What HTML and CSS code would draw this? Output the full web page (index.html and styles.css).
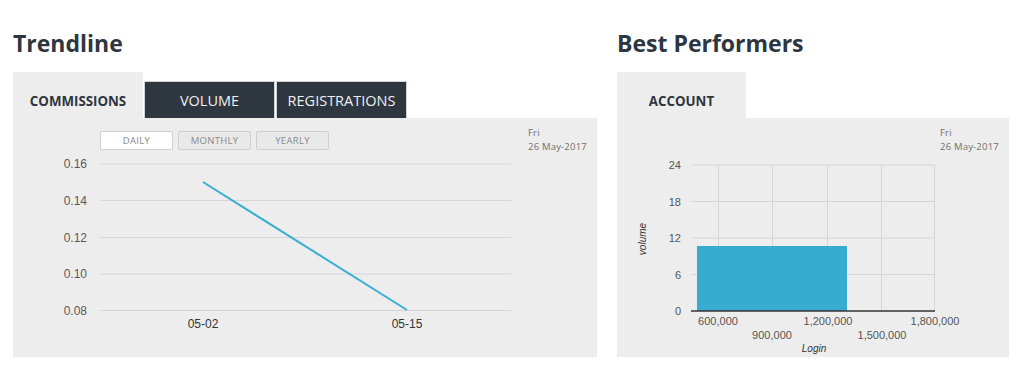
FILE: index.html
```html
<!DOCTYPE html>
<html>
<head>
<meta charset="utf-8">
<link rel="stylesheet" href="styles.css">
</head>
<body>
<div class="page">
  <section class="card card-left">
    <h2 class="title">Trendline</h2>
    <div class="tabs">
      <div class="tab tab-active tab-wide">COMMISSIONS</div>
      <div class="tab tab-dark">VOLUME</div>
      <div class="tab tab-dark">REGISTRATIONS</div>
    </div>
    <div class="panel">
      <div class="chart-left">
        <div class="ranges">
          <span class="range range-on">DAILY</span>
          <span class="range">MONTHLY</span>
          <span class="range">YEARLY</span>
        </div>
        <svg class="svg-left" width="515" height="207" viewBox="0 0 515 207">
          <g stroke="#d6d6d6" stroke-width="1">
            <line x1="87" y1="14" x2="498" y2="14"/>
            <line x1="87" y1="50.5" x2="498" y2="50.5"/>
            <line x1="87" y1="87.5" x2="498" y2="87.5"/>
            <line x1="87" y1="124" x2="498" y2="124"/>
            <line x1="87" y1="160.5" x2="498" y2="160.5"/>
          </g>
          <g class="axis-text" text-anchor="end">
            <text x="74" y="18">0.16</text>
            <text x="74" y="55">0.14</text>
            <text x="74" y="92">0.12</text>
            <text x="74" y="128">0.10</text>
            <text x="74" y="165">0.08</text>
          </g>
          <line x1="190" y1="32" x2="394" y2="160" stroke="#3aaed0" stroke-width="2"/>
          <g class="axis-text dark" text-anchor="middle">
            <text x="190" y="178">05-02</text>
            <text x="394" y="178">05-15</text>
          </g>
        </svg>
      </div>
      <div class="date">Fri<br>26 May-2017</div>
    </div>
  </section>

  <section class="card card-right">
    <h2 class="title">Best Performers</h2>
    <div class="tabs">
      <div class="tab tab-active tab-account">ACCOUNT</div>
    </div>
    <div class="panel">
      <svg class="svg-right" width="323" height="239" viewBox="0 0 323 239">
        <g stroke="#d6d6d6" stroke-width="1">
          <line x1="74" y1="47" x2="318" y2="47"/>
          <line x1="74" y1="83.5" x2="318" y2="83.5"/>
          <line x1="74" y1="120" x2="318" y2="120"/>
          <line x1="74" y1="156.5" x2="318" y2="156.5"/>
          <line x1="101.5" y1="47" x2="101.5" y2="193"/>
          <line x1="155.5" y1="47" x2="155.5" y2="193"/>
          <line x1="210.5" y1="47" x2="210.5" y2="193"/>
          <line x1="264.5" y1="47" x2="264.5" y2="193"/>
          <line x1="317.5" y1="47" x2="317.5" y2="193"/>
        </g>
        <rect x="80" y="128" width="150" height="65" fill="#38acd0"/>
        <line x1="74" y1="193" x2="318" y2="193" stroke="#333" stroke-width="1.5"/>
        <g class="axis-text small" text-anchor="end">
          <text x="64" y="51">24</text>
          <text x="64" y="88">18</text>
          <text x="64" y="124">12</text>
          <text x="64" y="161">6</text>
          <text x="64" y="197">0</text>
        </g>
        <g class="axis-text small" text-anchor="middle">
          <text x="101" y="207">600,000</text>
          <text x="211" y="207">1,200,000</text>
          <text x="318" y="207">1,800,000</text>
          <text x="155" y="221">900,000</text>
          <text x="265" y="221">1,500,000</text>
        </g>
        <text class="axis-title" x="197" y="234" text-anchor="middle">Login</text>
        <text class="axis-title" x="0" y="0" text-anchor="middle" transform="translate(29 121) rotate(-90)">volume</text>
      </svg>
      <div class="date">Fri<br>26 May-2017</div>
    </div>
  </section>
</div>
</body>
</html>
```

FILE: styles.css
```css
html, body {
  margin: 0;
  padding: 0;
  background: #ffffff;
}

.page {
  display: flex;
  gap: 20px;
  padding: 0 0 0 13px;
  font-family: "Open Sans", "Liberation Sans", sans-serif;
}

.card {
  display: flex;
  flex-direction: column;
}

.card-left {
  width: 584px;
}

.card-right {
  width: 392px;
}

.title {
  margin: 0;
  height: 72px;
  box-sizing: border-box;
  padding-top: 28px;
  font-size: 23px;
  line-height: 30px;
  font-weight: 700;
  color: #2d3640;
}

.tabs {
  display: flex;
  align-items: flex-end;
  height: 46px;
  gap: 1px;
}

.tab {
  box-sizing: border-box;
  display: flex;
  align-items: center;
  justify-content: center;
  font-size: 14.5px;
}

.tab-active {
  height: 46px;
  background: #ededed;
  color: #2d3640;
  font-weight: 700;
  font-size: 13.3px;
  padding-top: 11px;
}

.tab-wide {
  width: 130px;
}

.tab-account {
  width: 129px;
}

.tab-dark {
  height: 37px;
  width: 131px;
  background: #2e3640;
  color: #eef0f2;
  border: 1px solid #d0d3d6;
  border-bottom: none;
}

.panel {
  display: flex;
  height: 239px;
  background: #ededed;
}

.chart-left {
  width: 515px;
  display: flex;
  flex-direction: column;
}

.ranges {
  display: flex;
  gap: 5px;
  margin: 13px 0 0 87px;
}

.range {
  box-sizing: border-box;
  width: 73px;
  height: 19px;
  border: 1px solid #cfcfcf;
  border-radius: 2px;
  background: #e9e9e9;
  color: #8a8a8a;
  font-size: 9.5px;
  letter-spacing: 0.3px;
  display: flex;
  align-items: center;
  justify-content: center;
}

.range-on {
  background: #ffffff;
}

.svg-left,
.svg-right {
  display: block;
  overflow: visible;
}

.date {
  padding-top: 8px;
  font-size: 9.5px;
  line-height: 14px;
  color: #6f6f6f;
  letter-spacing: 0.2px;
}

.axis-text {
  font-family: "Liberation Sans", Arial, sans-serif;
  font-size: 12px;
  fill: #5a5a5a;
}

.axis-text.dark {
  fill: #333;
}

.axis-text.small {
  font-size: 11px;
  fill: #555;
}

.axis-title {
  font-family: "Liberation Sans", Arial, sans-serif;
  font-size: 10px;
  font-style: italic;
  fill: #333;
}
```
